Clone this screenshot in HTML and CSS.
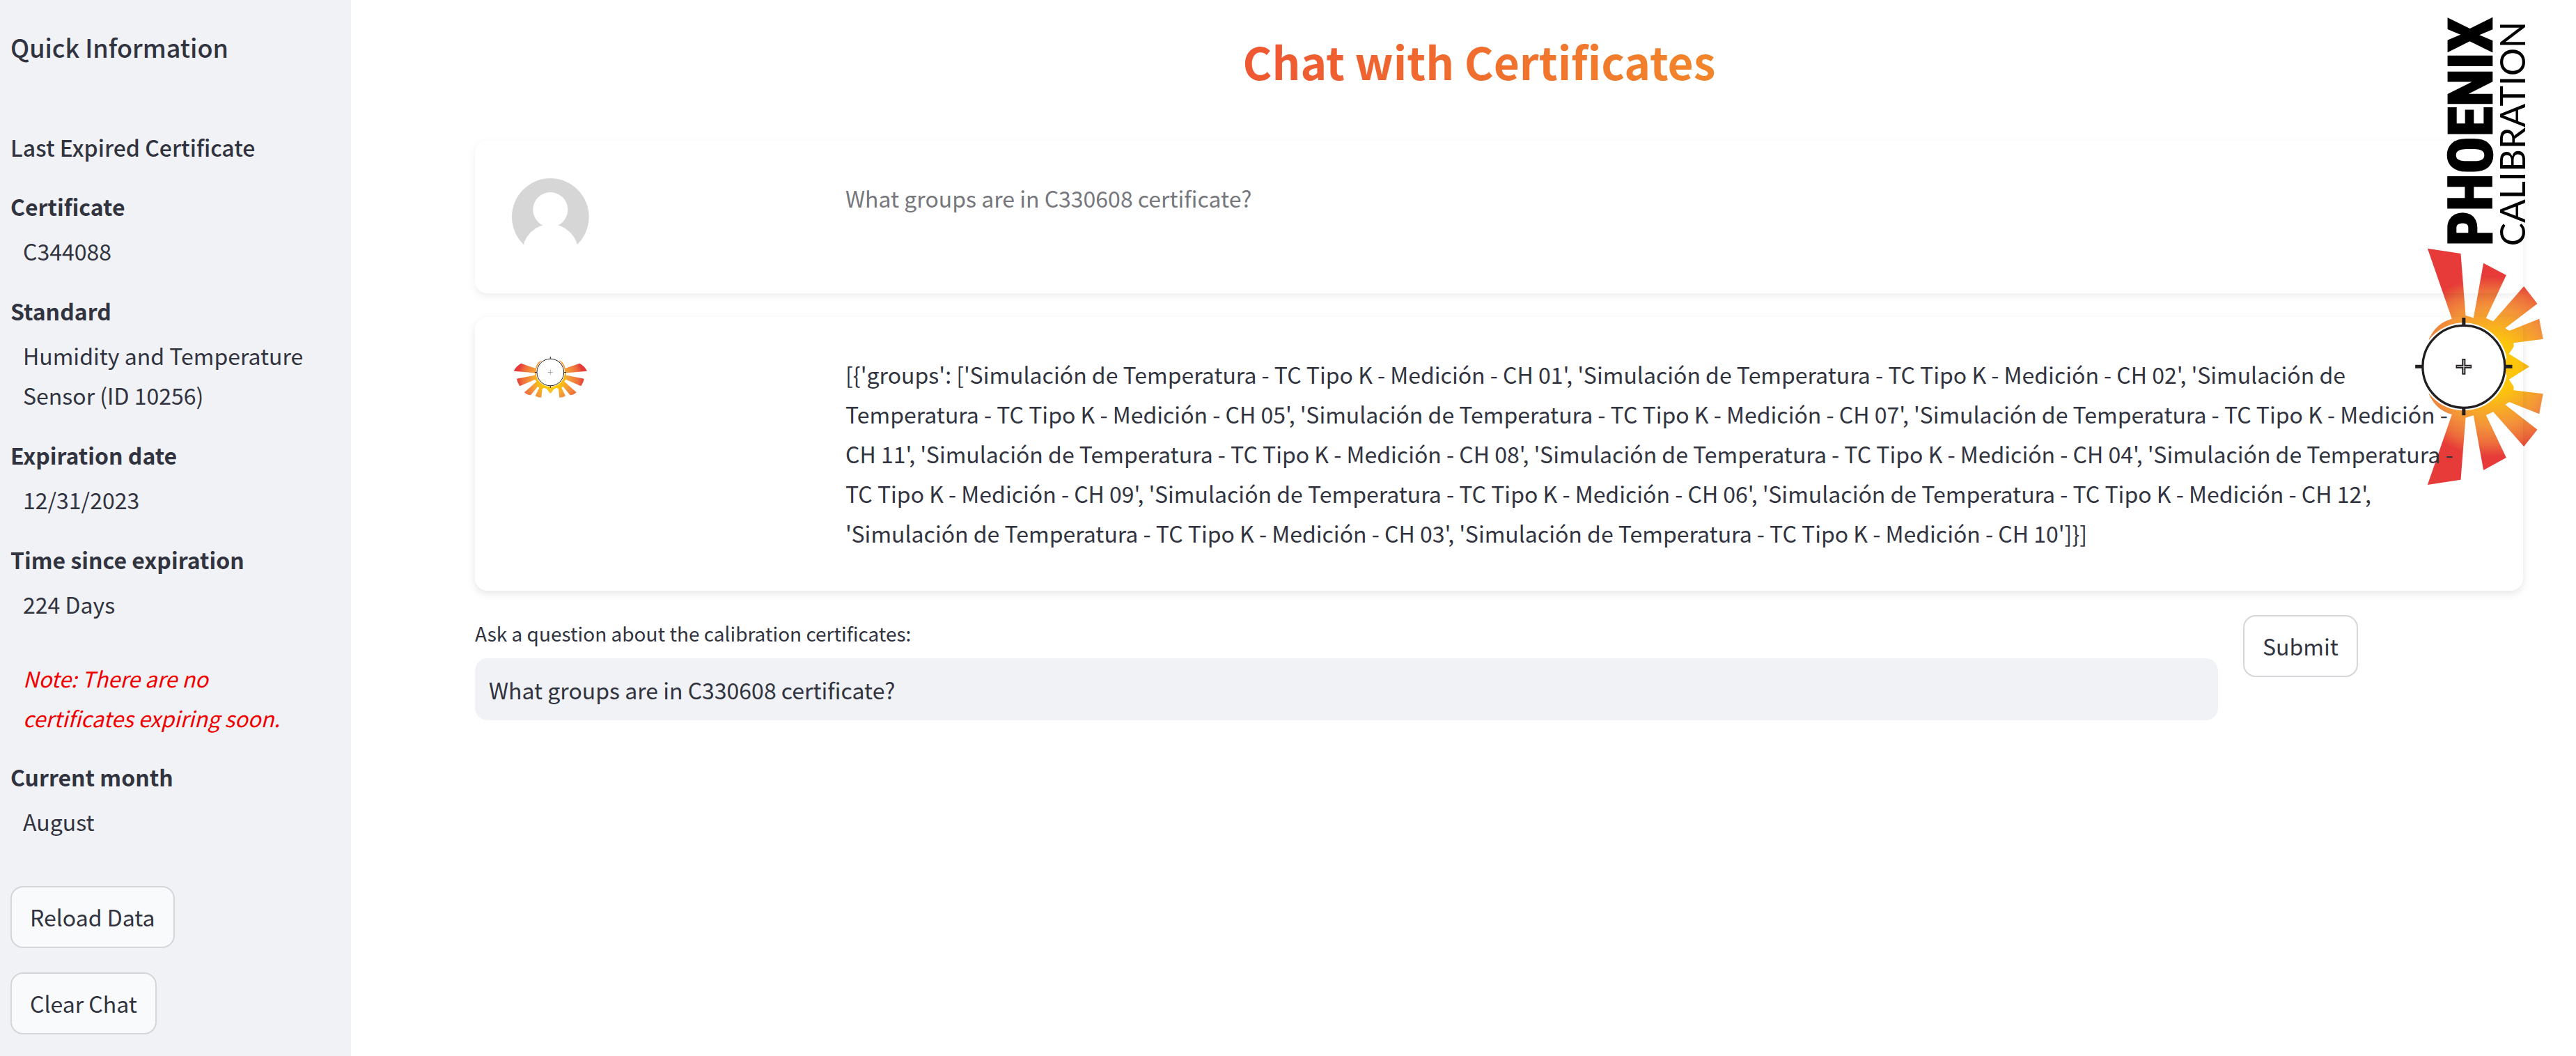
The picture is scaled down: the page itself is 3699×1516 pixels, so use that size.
FILE: index.html
```html
<!DOCTYPE html>
<html lang="en">
<head>
<meta charset="utf-8">
<meta name="viewport" content="width=device-width, initial-scale=1">
<title>Chat with Certificates</title>
<link rel="stylesheet" href="styles.css">
</head>
<body>
<div class="app">
  <aside class="sidebar">
    <h2 class="sidebar-title">Quick Information</h2>
    <h3 class="sidebar-subtitle">Last Expired Certificate</h3>
    <dl class="facts">
      <div class="fact"><dt>Certificate</dt><dd>C344088</dd></div>
      <div class="fact"><dt>Standard</dt><dd>Humidity and Temperature Sensor (ID 10256)</dd></div>
      <div class="fact"><dt>Expiration date</dt><dd>12/31/2023</dd></div>
      <div class="fact"><dt>Time since expiration</dt><dd>224 Days</dd></div>
    </dl>
    <p class="note">Note: There are no certificates expiring soon.</p>
    <dl class="facts">
      <div class="fact"><dt>Current month</dt><dd>August</dd></div>
    </dl>
    <div class="actions">
      <button class="button" type="button">Reload Data</button>
      <button class="button" type="button">Clear Chat</button>
    </div>
  </aside>

  <main class="main">
    <svg class="brand" viewBox="144 60 560 2040" role="img" aria-label="Phoenix Calibration">
      <defs>
        <radialGradient id="flame" gradientUnits="userSpaceOnUse" cx="470" cy="559" r="400">
          <stop offset="0.28" stop-color="#fdc60b"/>
          <stop offset="0.64" stop-color="#f3943a"/>
          <stop offset="0.82" stop-color="#ed6f3c"/>
          <stop offset="0.97" stop-color="#e63b38"/>
        </radialGradient>
      </defs>
      <text class="brand-name" transform="translate(472 1060) rotate(-90)">PHOENIX</text>
      <text class="brand-sub" transform="translate(616 1060) rotate(-90)">CALIBRATION</text>
      <g transform="translate(0 1020)">
        <path fill="url(#flame)" d="M203 440Q235 370 302 353L197 50L340 72L361 339L395 349L438 113L536 165L449 350L480 364L612 213L670 288L532 393Q540 401 550 404L678 353L695 440L568 457V473L548 504V614L568 645V661L695 676L678 763L550 712Q540 715 532 723L670 830L612 903L480 754L449 768L536 951L438 1005L395 769L361 779L340 1046L197 1068L302 765Q235 748 203 678Z"/>
        <circle cx="353" cy="559" r="189" fill="#fff"/>
        <path fill="url(#flame)" d="M548 504L636 559L548 614L536 594L530 559L536 524Z"/>
        <circle cx="353" cy="559" r="177" fill="#fff" stroke="#231f20" stroke-width="10"/>
        <path d="M353 348V380M353 738V769M144 559H174M532 559H562" stroke="#231f20" stroke-width="15"/>
        <path d="M353 525V593M319 559H387" stroke="#231f20" stroke-width="15"/>
        <path d="M353 530V588M324 559H382" stroke="#c9c9c9" stroke-width="4"/>
      </g>
    </svg>

    <h1 class="title"><span class="title-text">Chat with Certificates</span></h1>

    <section class="chat">
      <article class="message message-user">
        <svg class="avatar" viewBox="0 0 333 333" role="img" aria-label="User">
          <circle cx="166" cy="166" r="166" fill="#d6d6d6"/>
          <circle cx="166" cy="135" r="75" fill="#fff"/>
          <circle cx="166" cy="317" r="120" fill="#fff"/>
        </svg>
        <p class="message-text">What groups are in C330608 certificate?</p>
      </article>
      <article class="message">
        <svg class="avatar avatar-bot" viewBox="-166 -76 333 200" role="img" aria-label="Phoenix assistant">
          <defs>
            <radialGradient id="flame-small" gradientUnits="userSpaceOnUse" cx="0" cy="30" r="150">
              <stop offset="0.3" stop-color="#fdc60b"/>
              <stop offset="0.55" stop-color="#f49a38"/>
              <stop offset="0.8" stop-color="#ee6f3c"/>
              <stop offset="0.95" stop-color="#e63b38"/>
            </radialGradient>
            <path id="wing" d="M0 0L40 -51Q60 -40 64 -17L126 -38Q148 -26 158 -5L66 3L68 13L145 28Q142 46 132 59L66 31L60 40L112 86Q100 98 85 98L54 61L48 67L65 102Q52 109 39 109L35 72L28 67L16 71L0 92Z"/>
          </defs>
          <use href="#wing" fill="url(#flame-small)"/>
          <use href="#wing" fill="url(#flame-small)" transform="scale(-1 1)"/>
          <circle r="62" fill="#fff"/>
          <circle r="58" fill="#fff" stroke="#231f20" stroke-width="3"/>
          <path d="M0 -68V-58M0 58V67M-68 0H-58M58 0H68" stroke="#231f20" stroke-width="3"/>
          <path d="M0 -11V11M-11 0H11" stroke="#aaa" stroke-width="3"/>
        </svg>
        <p class="message-text">[{'groups': ['Simulación de Temperatura - TC Tipo K - Medición - CH 01', 'Simulación de Temperatura - TC Tipo K - Medición - CH 02', 'Simulación de Temperatura - TC Tipo K - Medición - CH 05', 'Simulación de Temperatura - TC Tipo K - Medición - CH 07', 'Simulación de Temperatura - TC Tipo K - Medición - CH 11', 'Simulación de Temperatura - TC Tipo K - Medición - CH 08', 'Simulación de Temperatura - TC Tipo K - Medición - CH 04', 'Simulación de Temperatura - TC Tipo K - Medición - CH 09', 'Simulación de Temperatura - TC Tipo K - Medición - CH 06', 'Simulación de Temperatura - TC Tipo K - Medición - CH 12', 'Simulación de Temperatura - TC Tipo K - Medición - CH 03', 'Simulación de Temperatura - TC Tipo K - Medición - CH 10']}]</p>
      </article>
    </section>

    <form class="ask">
      <div class="ask-field">
        <label class="ask-label" for="question">Ask a question about the calibration certificates:</label>
        <input class="ask-input" id="question" type="text" value="What groups are in C330608 certificate?">
      </div>
      <div class="ask-submit">
        <button class="button" type="submit">Submit</button>
      </div>
    </form>
  </main>
</div>
</body>
</html>
```

FILE: styles.css
```css
* {
  box-sizing: border-box;
}

body {
  margin: 0;
  background: #fff;
  color: #31333f;
  font-family: "Noto Sans CJK SC", "Noto Sans", sans-serif;
  font-size: 32px;
  line-height: 57px;
}

h1, h2, h3, p, dl, dd {
  margin: 0;
}

.app {
  display: flex;
  min-height: 100vh;
}

/* Sidebar */

.sidebar {
  flex: 0 0 504px;
  padding: 43px 48px 30px 15px;
  background: #f0f2f6;
}

.sidebar-title {
  margin-bottom: 92px;
  font-size: 36px;
  font-weight: 500;
  line-height: 48px;
}

.sidebar-subtitle {
  margin-bottom: 28px;
  font-size: 32px;
  font-weight: 500;
}

.facts {
  display: flex;
  flex-direction: column;
  gap: 29px;
}

.fact dt {
  margin-bottom: 7px;
  font-weight: 700;
}

.fact dd {
  padding-left: 18px;
}

.note {
  margin: 49px 0 28px;
  padding-left: 18px;
  color: #f00000;
  font-size: 31px;
  font-style: italic;
}

.actions {
  display: flex;
  flex-direction: column;
  align-items: flex-start;
  gap: 35px;
  margin-top: 64px;
}

.button {
  height: 89px;
  padding: 0 26px;
  border: 2px solid #d5d6d9;
  border-radius: 18px;
  background: rgba(255, 255, 255, 0.6);
  color: inherit;
  font: inherit;
}

/* Main column */

.main {
  position: relative;
  flex: 1;
  min-width: 0;
  padding: 48px 76px 48px 178px;
}

.brand {
  position: absolute;
  top: 20px;
  right: 44px;
  width: 187px;
  height: 680px;
}

.brand-name {
  font-family: "Liberation Sans Narrow", "Roboto Condensed", "Liberation Sans", sans-serif;
  font-size: 264px;
  font-weight: 700;
  stroke: #000;
  stroke-width: 8px;
}

.brand-sub {
  font-family: Lato, sans-serif;
  font-size: 150px;
}

.title {
  margin-bottom: 76px;
  padding-right: 57px;
  font-size: 64px;
  font-weight: 700;
  line-height: 78px;
  text-align: center;
}

.title-text {
  background: linear-gradient(90deg, #ee5732, #f2862b);
  background-clip: text;
  -webkit-background-clip: text;
  color: transparent;
}

.chat {
  position: relative;
  display: flex;
  flex-direction: column;
  gap: 34px;
}

.message {
  display: grid;
  grid-template-columns: 443px 1fr;
  gap: 36px;
  padding: 54px 96px 54px 53px;
  border-radius: 18px;
  box-shadow: 0 4px 12px rgba(0, 0, 0, 0.1);
}

.message-user {
  color: #76777d;
  box-shadow: 0 4px 12px rgba(0, 0, 0, 0.07);
}

.avatar {
  display: block;
  width: 111px;
  height: 111px;
}

.avatar-bot {
  height: 67px;
}

/* Question form */

.ask {
  display: flex;
  align-items: flex-start;
  gap: 36px;
  margin-top: 35px;
  padding-right: 57px;
}

.ask-field {
  flex: 1;
}

.ask-label {
  display: block;
  margin-bottom: 10px;
  font-size: 28px;
  line-height: 52px;
}

.ask-input {
  display: block;
  width: 100%;
  height: 89px;
  padding: 0 20px;
  border: 0;
  border-radius: 18px;
  background: #f0f2f6;
  color: inherit;
  font: inherit;
}

.ask-submit {
  flex: 0 0 345px;
}
```
